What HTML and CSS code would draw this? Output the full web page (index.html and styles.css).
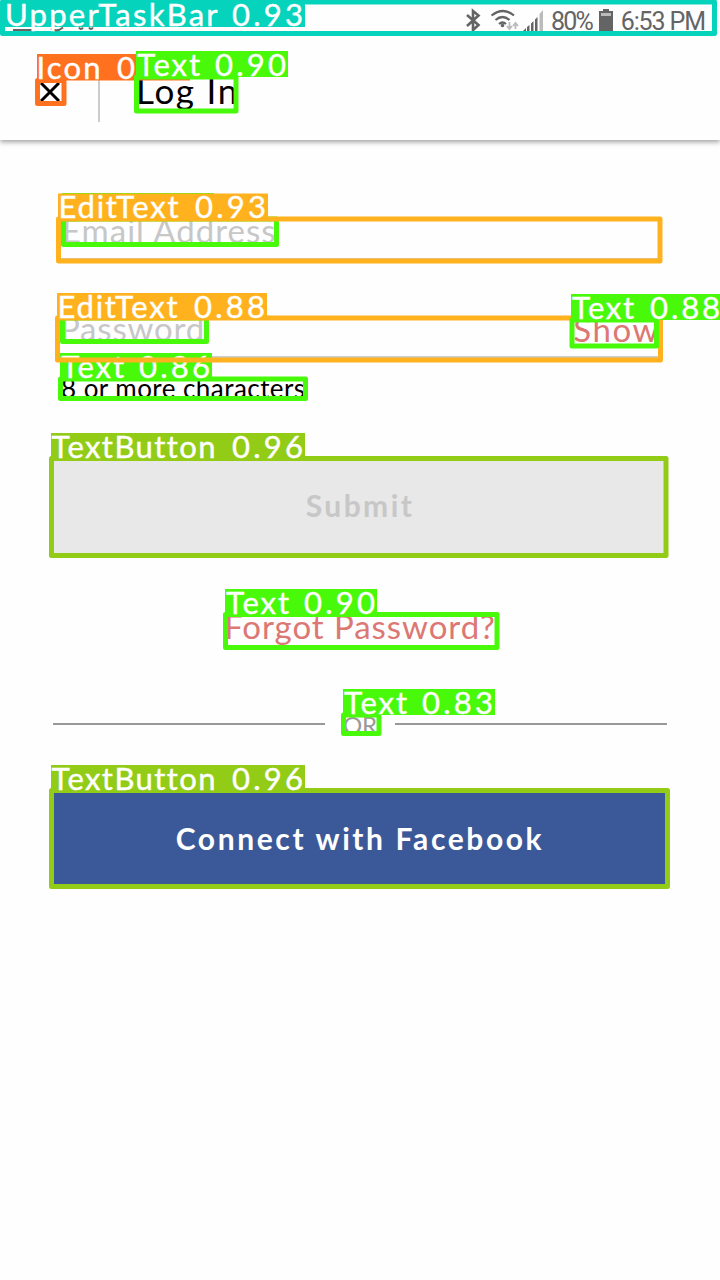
FILE: index.html
```
<!DOCTYPE html>
<html lang="en">
<head>
<meta charset="utf-8">
<title>Log In</title>
<link rel="stylesheet" href="styles.css">
</head>
<body>
<div class="screen">
  <header class="header">
    <div class="status">
      <svg class="status-icons" width="82" height="26" viewBox="0 0 82 26">
        <path d="M2 7l11.500 10-5.500 5V3l5.500 4.500L2 18" fill="none" stroke="#646464" stroke-width="2.600"/>
        <g fill="none" stroke="#646464" stroke-width="2.200"><path d="M26.500 7.500q11.500-9 22.500 0M30.500 12q7-6 14 0M34 16q3.500-3 7 0"/></g>
        <circle cx="37.500" cy="17.500" r="1.800" fill="#646464"/>
        <path d="M44.500 14v7m-2.500-3l2.500 3 2.500-3M50.500 21v-6m-2.500 3l2.500-3 2.500 3" fill="none" stroke="#bbb" stroke-width="1.800"/>
        <g fill="#646464"><path d="M57 24l4-4v4zM62 19l2.500-2v7H62zM66 15.500l2.500-2.500v11H66zM70 11.500L72.500 9v15H70z"/></g>
        <path d="M74.500 6L78 2v22h-3.500z" fill="#bbb"/>
      </svg>
      <span class="level">80%</span>
      <svg class="battery" width="14" height="24" viewBox="0 0 14 24"><path d="M0 3h4V1h6v2h4v21H0z" fill="#646464"/><path d="M2 5h10v3H2z" fill="#bbb"/></svg>
      <span class="clock">6:53 PM</span>
    </div>
    <div class="toolbar">
      <svg class="close" width="20" height="20" viewBox="0 0 20 20"><path d="M1 1l18 18M19 1L1 19" fill="none" stroke="#000" stroke-width="3"/></svg>
      <span class="divider"></span>
      <h1 class="title">Log In</h1>
    </div>
  </header>
  <main class="form">
    <div class="field"><span class="hint email">Email Address</span></div>
    <div class="field second"><span class="hint password">Password</span><span class="show">Show</span></div>
    <p class="note">8 or more characters</p>
    <div class="button submit"><span>Submit</span></div>
    <p class="forgot">Forgot Password?</p>
    <div class="or"><span class="rule"></span><span class="or-text">OR</span><span class="rule"></span></div>
    <div class="button facebook"><span>Connect with Facebook</span></div>
  </main>
  <svg class="marks" width="720" height="1280" viewBox="0 0 720 1280">
    <g class="teal">
      <rect class="box" x="2.5" y="2" width="712" height="31.5"/>
      <rect class="tag" x="2" y="1" width="303" height="26"/>
      <path d="M13 30h20M51 28.500q6 4 12-1M79 27.500q2 3 4 0M89 27.500q2 3 4 0" fill="none" stroke="#646464" stroke-width="2"/>
      <text y="26"><tspan x="5" textLength="212">UpperTaskBar</tspan> <tspan x="232" textLength="71">0.93</tspan></text>
    </g>
    <g class="orange">
      <rect class="box" x="37.5" y="80.5" width="26.5" height="23"/>
      <rect class="tag" x="37" y="54" width="153" height="26.5"/>
      <text y="78.5"><tspan x="36.5" textLength="64">Icon</tspan> <tspan x="117" textLength="19">0</tspan></text>
    </g>
    <g class="green">
      <rect class="box" x="136.5" y="77" width="99.5" height="34"/>
      <rect class="tag" x="136" y="51" width="152" height="26"/>
      <text y="75.5"><tspan x="137" textLength="63">Text</tspan> <tspan x="215" textLength="71">0.90</tspan></text>
      <rect class="box" x="63.5" y="219" width="213" height="25.5"/>
      <rect class="tag" x="62" y="193" width="152" height="26"/>
      <rect class="box" x="62.5" y="318" width="144" height="23.5"/>
      <rect class="box" x="60.5" y="379" width="245" height="19.5"/>
      <rect class="tag" x="60" y="353" width="152" height="26"/>
      <text y="377.5"><tspan x="61" textLength="63">Text</tspan> <tspan x="139" textLength="71">0.86</tspan></text>
    </g>
    <g class="amber">
      <rect class="box" x="58.5" y="219" width="601.5" height="42"/>
      <rect class="tag" x="58" y="193.5" width="210" height="26"/>
      <text y="218"><tspan x="58.5" textLength="120">EditText</tspan> <tspan x="195" textLength="71">0.93</tspan></text>
      <rect class="box" x="57.5" y="318" width="603" height="42"/>
      <rect class="tag" x="57" y="293" width="210" height="26"/>
      <text y="317.5"><tspan x="57.5" textLength="120">EditText</tspan> <tspan x="194" textLength="71">0.88</tspan></text>
    </g>
    <g class="green">
      <rect class="box" x="572" y="320" width="84.5" height="26"/>
      <rect class="tag" x="571" y="294" width="149" height="26"/>
      <text y="318.5"><tspan x="572" textLength="62">Text</tspan> <tspan x="650" textLength="70">0.88</tspan></text>
      <rect class="box" x="225.5" y="614.5" width="271.5" height="33"/>
      <rect class="tag" x="225" y="589" width="152" height="26"/>
      <text y="613.5"><tspan x="226" textLength="63">Text</tspan> <tspan x="304" textLength="71">0.90</tspan></text>
      <rect class="box" x="343.5" y="715" width="35.5" height="18.5"/>
      <rect class="tag" x="343" y="689" width="152" height="26"/>
      <text y="713.5"><tspan x="344" textLength="63">Text</tspan> <tspan x="422" textLength="71">0.83</tspan></text>
    </g>
    <g class="lime">
      <rect class="box" x="51.5" y="458.5" width="614.5" height="97"/>
      <rect class="tag" x="51" y="433" width="254" height="26"/>
      <text y="457.5"><tspan x="51.5" textLength="164">TextButton</tspan> <tspan x="232" textLength="71">0.96</tspan></text>
      <rect class="box" x="51.5" y="790.5" width="616" height="96"/>
      <rect class="tag" x="51" y="765" width="254" height="26"/>
      <text y="789.5"><tspan x="51.5" textLength="164">TextButton</tspan> <tspan x="232" textLength="71">0.96</tspan></text>
    </g>
  </svg>
</div>
</body>
</html>
```
FILE: styles.css
```
body { margin: 0; background: #fefefe; font-family: Lato, sans-serif; font-variant-ligatures: none; }
h1, p { margin: 0; font-weight: 400; }
.screen { position: relative; width: 720px; height: 1280px; overflow: hidden; }
.header { height: 140px; background: #fefefe; box-shadow: 0 2px 5px rgba(0,0,0,.38); }
.status { height: 42px; box-sizing: border-box; padding: 8px 15px 0 465px; display: flex; align-items: flex-start; color: #646464; font: 25px/28px Roboto, sans-serif; white-space: nowrap; }
.status-icons { flex: none; }
.level { width: 49px; margin-left: 4px; letter-spacing: -1.8px; }
.battery { flex: none; }
.clock { margin-left: 8px; letter-spacing: -1.1px; }
.toolbar { height: 98px; display: flex; align-items: center; padding-left: 40px; }
.close { margin-top: 2px; }
.divider { width: 2px; height: 60px; margin: 2px 0 0 38px; background: #ccc; }
.title { margin: -3px 0 0 36px; font-size: 35px; line-height: 42px; letter-spacing: 1.7px; white-space: nowrap; }
.form { padding: 60px 53px 0; }
.field { height: 60px; box-sizing: border-box; border-bottom: 2px solid #ccc; margin: 0 6px; padding: 9px 0 0 3px; display: flex; justify-content: space-between; font-size: 33px; line-height: 42px; white-space: nowrap; }
.second { margin-top: 38px; padding-left: 1px; }
.hint { color: #c7c7c7; }
.email { letter-spacing: 1px; }
.password { letter-spacing: .8px; }
.show { color: #dc7873; letter-spacing: 1.6px; margin: 1px 1px 0 0; }
.note { height: 30px; margin: 15px 0 0 8px; font-size: 26px; line-height: 30px; letter-spacing: .45px; white-space: nowrap; }
.button { height: 98px; display: flex; align-items: center; justify-content: center; font-size: 30px; font-weight: 700; white-space: nowrap; }
.submit { margin-top: 53px; background: #e8e8e8; color: #c7c7c7; letter-spacing: 2.4px; }
.forgot { margin-top: 51px; height: 42px; text-align: center; color: #dc7873; font-size: 33px; line-height: 42px; letter-spacing: .95px; white-space: nowrap; }
.or { height: 30px; margin-top: 62px; display: flex; align-items: center; justify-content: space-between; color: #999; font-size: 24px; }
.rule { width: 272px; height: 2px; background: #999; }
.facebook { height: 96px; margin-top: 50px; padding-top: 1px; box-sizing: border-box; background: #3b5998; color: #fff; letter-spacing: 2.6px; }
.marks { position: absolute; inset: 0; }
.marks text { fill: #fff; stroke: #fff; stroke-width: .4px; font: 31px Lato, sans-serif; font-variant-ligatures: none; }
.box { fill: none; stroke: currentColor; stroke-width: 5px; stroke-linejoin: round; }
.tag { fill: currentColor; }
.teal { color: #05d3bc; }
.orange { color: #ff701f; }
.green { color: #48f90a; }
.amber { color: #ffb21d; }
.lime { color: #92cc17; }
```
